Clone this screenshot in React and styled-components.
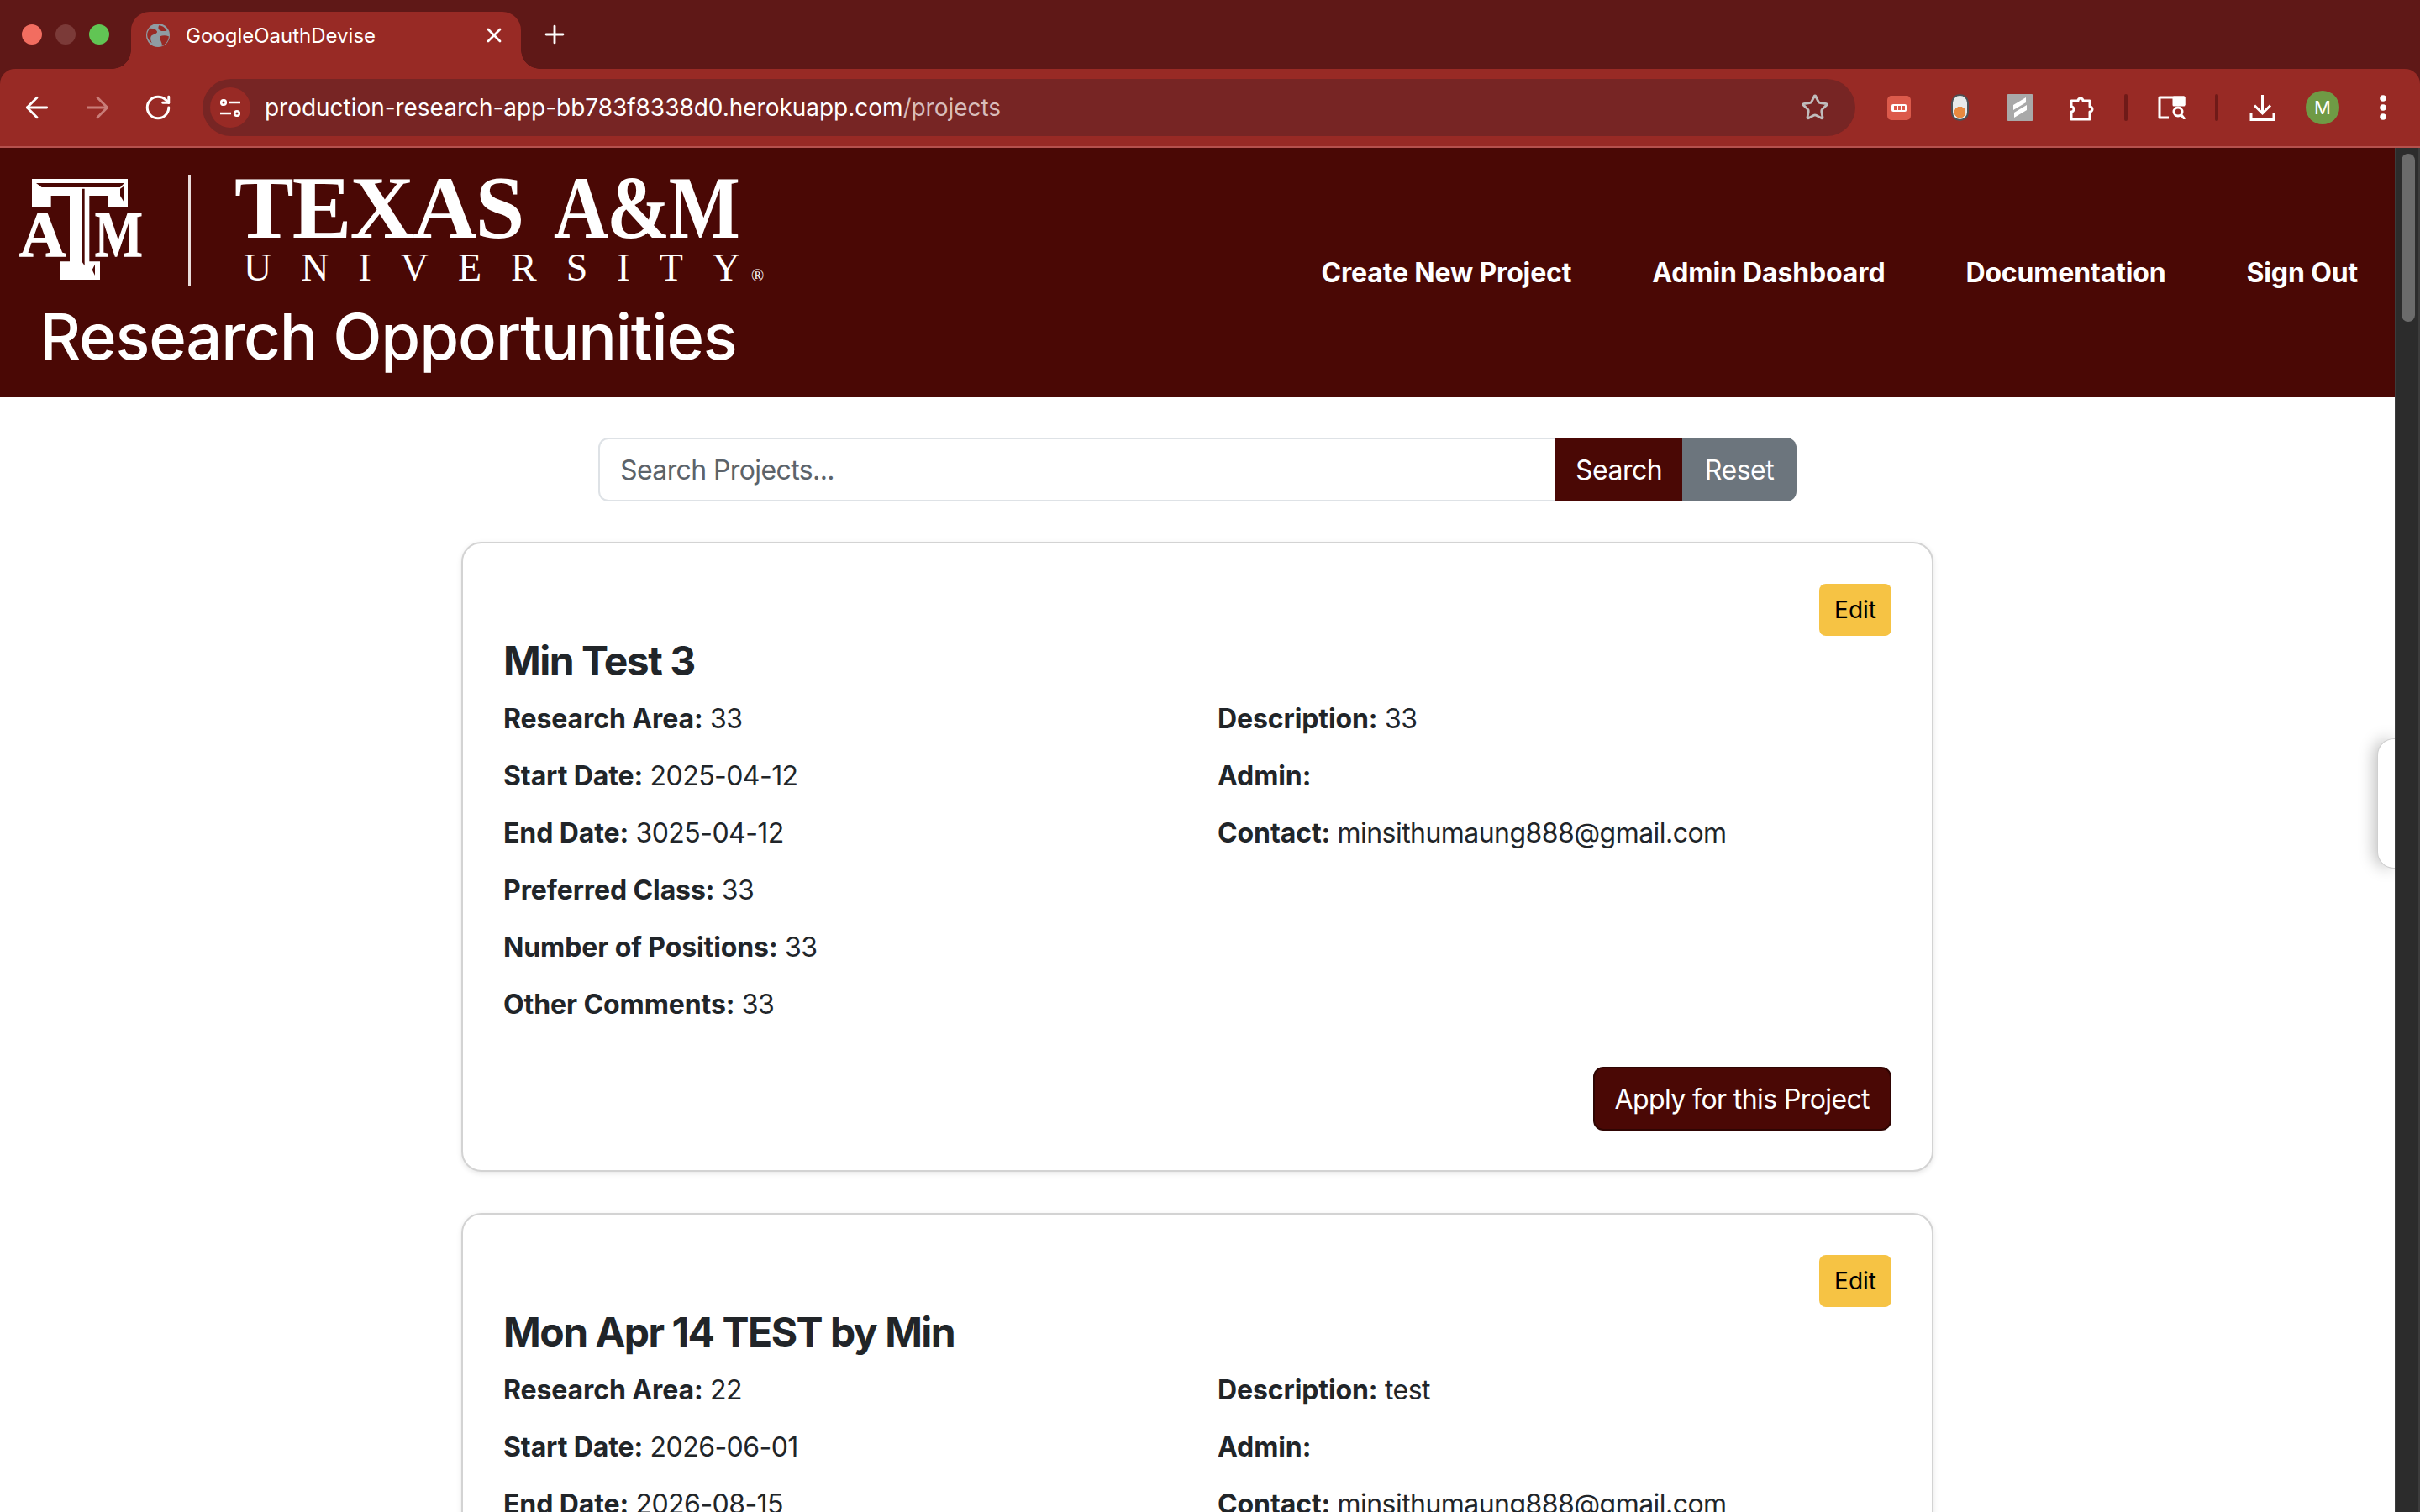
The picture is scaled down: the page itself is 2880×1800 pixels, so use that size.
import React from 'react'
import styled, { createGlobalStyle } from 'styled-components'
import { ArrowLeft, ArrowRight, RotateCw, Star, X, Plus } from 'lucide-react'

const GlobalStyle = createGlobalStyle`
  html, body {
    margin: 0;
    height: 100%;
    overflow: hidden;
    background: #fff;
  }
  * { box-sizing: border-box; }
  body {
    font-family: Inter, "Liberation Sans", sans-serif;
    color: #212529;
  }
`

const projects = [
  {
    title: 'Min Test 3',
    left: [
      ['Research Area:', '33'],
      ['Start Date:', '2025-04-12'],
      ['End Date:', '3025-04-12'],
      ['Preferred Class:', '33'],
      ['Number of Positions:', '33'],
      ['Other Comments:', '33'],
    ],
    right: [
      ['Description:', '33'],
      ['Admin:', ''],
      ['Contact:', 'minsithumaung888@gmail.com'],
    ],
  },
  {
    title: 'Mon Apr 14 TEST by Min',
    left: [
      ['Research Area:', '22'],
      ['Start Date:', '2026-06-01'],
      ['End Date:', '2026-08-15'],
      ['Preferred Class:', '22'],
      ['Number of Positions:', '22'],
      ['Other Comments:', '22'],
    ],
    right: [
      ['Description:', 'test'],
      ['Admin:', ''],
      ['Contact:', 'minsithumaung888@gmail.com'],
    ],
  },
]

const App = () => {
  return (
    <Screen>
      <GlobalStyle />
      <TabStrip>
        <Lights>
          <Light color="#f26d60" />
          <Light color="#7b3a38" />
          <Light color="#61c554" />
        </Lights>
        <Tab>
          <Globe viewBox="0 0 24 24">
            <circle cx="12" cy="12" r="12" fill="#8f9ca3" />
            <path d="M4 5c4 0 6 1 7 3s-3 3-5 4-2 5 0 8c-3-2-5-5-5-8s1-5 3-7zM14 13c3-1 6-1 9 0 0 4-3 8-7 10 1-3-3-7-2-10zM13 2c3 0 6 2 8 5-2 1-5 1-7 0s-2-3-1-5z" fill="#982a25" />
          </Globe>
          <TabTitle>GoogleOauthDevise</TabTitle>
          <CloseSlot><X size={28} color="#fff" strokeWidth={2.4} /></CloseSlot>
        </Tab>
        <NewTab>
          <Plus size={34} color="#fff" strokeWidth={2} />
        </NewTab>
      </TabStrip>

      <Toolbar>
        <NavIcons>
          <NavSlot><ArrowLeft size={40} color="#fff" strokeWidth={1.7} /></NavSlot>
          <NavSlot><ArrowRight size={40} color="#c97d78" strokeWidth={1.7} /></NavSlot>
          <NavSlot><RotateCw size={34} color="#fff" strokeWidth={2.1} /></NavSlot>
        </NavIcons>
        <Omnibox>
          <SiteInfo>
            <TuneIcon viewBox="0 0 24 21" fill="none" stroke="#fff" strokeWidth="2.6">
              <circle cx="4" cy="4" r="2.8" />
              <path d="M11 4h13M0 17h13" />
              <circle cx="20" cy="17" r="2.8" />
            </TuneIcon>
          </SiteInfo>
          <Url>
            production-research-app-bb783f8338d0.herokuapp.com<span>/projects</span>
          </Url>
          <Star size={34} color="#c0bcbc" strokeWidth={2} />
        </Omnibox>
        <Extensions>
          <ToolSlot $w={72}><ExtRed><span><i /><i /><i /></span></ExtRed></ToolSlot>
          <ToolSlot $w={72}><ExtPill /></ToolSlot>
          <ToolSlot $w={72}>
            <ExtGrey viewBox="0 0 32 32">
              <rect width="32" height="32" rx="2" fill="#a9a9a9" />
              <path d="M8 13 23 4v6L8 19zM9 22l15-9v6L9 28z" fill="#fff" />
            </ExtGrey>
          </ToolSlot>
          <ToolSlot $w={76}>
            <PuzzleIcon viewBox="0 0 30 31" fill="none" stroke="#fff" strokeWidth="3" strokeLinejoin="round">
              <path d="M2 7h8a3 3 0 0 1 6 0h8v7a3 3 0 0 1 0 6v9H2v-9a3 3 0 0 0 0-6z" />
            </PuzzleIcon>
          </ToolSlot>
          <ToolSlot $w={28}><Divider /></ToolSlot>
          <ToolSlot $w={80}>
            <ReaderIcon viewBox="0 0 33 28" fill="none" stroke="#fff" strokeWidth="3" strokeLinejoin="round">
              <path d="M13 26H2V2h29v9" />
              <path d="M19 2h12v9H19z" fill="#fff" />
              <circle cx="24" cy="19" r="5" />
              <path d="m28 23 4 5" />
            </ReaderIcon>
          </ToolSlot>
          <ToolSlot $w={28}><Divider /></ToolSlot>
          <ToolSlot $w={80}>
            <DownloadIcon viewBox="0 0 31 31" fill="none" stroke="#fff" strokeWidth="3">
              <path d="M15.5 0v21M6 12.5l9.5 9.5 9.5-9.5" />
              <path d="M2 21v8.5h27V21" />
            </DownloadIcon>
          </ToolSlot>
          <ToolSlot $w={64}><Avatar>M</Avatar></ToolSlot>
          <ToolSlot $w={80}>
            <DotsIcon viewBox="0 0 10 32" fill="#fff">
              <circle cx="5" cy="5" r="3.8" />
              <circle cx="5" cy="16" r="3.8" />
              <circle cx="5" cy="27" r="3.8" />
            </DotsIcon>
          </ToolSlot>
        </Extensions>
      </Toolbar>

      <Viewport>
        <Page>
          <Header>
            <Brand>
              <LogoRow>
                <LogoMark viewBox="0 0 438 360">
                  <path d="M45 0H387V100H318V60H250V295H288V360H145V295H180V60H113V100H45Z" fill="#fff" />
                  <path d="M60 15H375L360 30H80Z" fill="#4a0805" />
                  <path d="M223 35H233V310L223 295Z" fill="#4a0805" />
                  <path d="M360 35L375 25V85L360 60Z" fill="#4a0805" />
                  <path d="M260 325L270 305V345Z" fill="#4a0805" />
                  <text x="0" y="275" fontFamily="Liberation Serif" fontWeight="700" fontSize="232" textLength="165" lengthAdjust="spacingAndGlyphs" fill="#fff" stroke="#fff" strokeWidth="4">A</text>
                  <text x="270" y="275" fontFamily="Liberation Serif" fontWeight="700" fontSize="232" textLength="170" lengthAdjust="spacingAndGlyphs" fill="#fff" stroke="#fff" strokeWidth="4">M</text>
                </LogoMark>
                <LogoRule />
                <Wordmark>
                  <WordTop>TEXAS <Narrow>A&amp;M</Narrow></WordTop>
                  <WordBottom>UNIVERSITY<sup>®</sup></WordBottom>
                </Wordmark>
              </LogoRow>
              <PageTitle>Research Opportunities</PageTitle>
            </Brand>
            <MainNav>
              <NavLink>Create New Project</NavLink>
              <NavLink>Admin Dashboard</NavLink>
              <NavLink>Documentation</NavLink>
              <NavLink>Sign Out</NavLink>
            </MainNav>
          </Header>

          <SearchForm>
            <SearchInput placeholder="Search Projects..." />
            <SearchButton>Search</SearchButton>
            <ResetButton>Reset</ResetButton>
          </SearchForm>

          <CardList>
            {projects.map((project) => (
              <Card key={project.title}>
                <EditRow>
                  <EditButton>Edit</EditButton>
                </EditRow>
                <CardTitle>{project.title}</CardTitle>
                <Columns>
                  <div>
                    {project.left.map(([label, value]) => (
                      <Field key={label}><b>{label}</b> {value}</Field>
                    ))}
                  </div>
                  <div>
                    {project.right.map(([label, value]) => (
                      <Field key={label}><b>{label}</b> {value}</Field>
                    ))}
                  </div>
                </Columns>
                <ApplyRow>
                  <ApplyButton>Apply for this Project</ApplyButton>
                </ApplyRow>
              </Card>
            ))}
          </CardList>

          <SideHandle />
        </Page>
        <Scrollbar>
          <Thumb />
        </Scrollbar>
      </Viewport>
    </Screen>
  )
}

const Screen = styled.div`
  width: 2880px;
  height: 1800px;
  display: flex;
  flex-direction: column;
  overflow: hidden;
  background: #5f1817;
`

const TabStrip = styled.div`
  height: 82px;
  flex: none;
  background: #5f1817;
  display: flex;
  align-items: flex-end;
`

const Lights = styled.div`
  width: 156px;
  height: 82px;
  flex: none;
  padding-left: 26px;
  display: flex;
  align-items: center;
  gap: 16px;
`

const Light = styled.span`
  width: 24px;
  height: 24px;
  border-radius: 50%;
  background: ${(p) => p.color};
`

const Tab = styled.div`
  position: relative;
  width: 464px;
  height: 68px;
  flex: none;
  padding: 0 14px 12px 18px;
  background: #982a25;
  border-radius: 22px 22px 0 0;
  display: flex;
  align-items: center;

  &::before,
  &::after {
    content: '';
    position: absolute;
    bottom: 0;
    width: 22px;
    height: 22px;
  }

  &::before {
    left: -22px;
    background: radial-gradient(circle at 0 0, transparent 21.5px, #982a25 22px);
  }

  &::after {
    right: -22px;
    background: radial-gradient(circle at 100% 0, transparent 21.5px, #982a25 22px);
  }
`

const Globe = styled.svg`
  width: 28px;
  height: 28px;
  flex: none;
`

const TabTitle = styled.span`
  flex: 1;
  margin-left: 19px;
  color: #fff;
  font-size: 24px;
`

const CloseSlot = styled.div`
  width: 36px;
  display: flex;
  justify-content: center;
`

const NewTab = styled.div`
  margin-left: 23px;
  align-self: center;
  display: flex;
`

const Toolbar = styled.div`
  height: 94px;
  flex: none;
  background: #982a25;
  border-bottom: 2px solid #b5514d;
  border-radius: 18px 18px 0 0;
  display: flex;
  align-items: center;
`

const NavIcons = styled.div`
  width: 241px;
  flex: none;
  padding-left: 8px;
  display: flex;
  align-items: center;
`

const NavSlot = styled.div`
  width: 72px;
  display: flex;
  justify-content: center;
`

const Omnibox = styled.div`
  width: 1967px;
  height: 68px;
  flex: none;
  border-radius: 34px;
  background: #772524;
  display: flex;
  align-items: center;
  padding: 0 31px 0 9px;
`

const SiteInfo = styled.div`
  width: 48px;
  height: 48px;
  border-radius: 50%;
  background: #982a25;
  display: flex;
  align-items: center;
  justify-content: center;
  flex: none;
`

const TuneIcon = styled.svg`
  width: 24px;
  height: 21px;
`

const Url = styled.div`
  flex: 1;
  margin-left: 17px;
  color: #fff;
  font-size: 28px;
  letter-spacing: -0.03px;

  span {
    color: #d8bdbb;
  }
`

const Extensions = styled.div`
  flex: 1;
  display: flex;
  align-items: center;
  padding-left: 16px;
`

const ToolSlot = styled.div`
  width: ${(p) => p.$w}px;
  flex: none;
  display: flex;
  align-items: center;
  justify-content: center;
`

const ExtRed = styled.div`
  width: 28px;
  height: 29px;
  border-radius: 5px;
  background: #dc5a4b;
  display: flex;
  align-items: center;
  justify-content: center;

  span {
    width: 18px;
    height: 9px;
    border-radius: 2px;
    background: #fff;
    display: flex;
    align-items: center;
    justify-content: center;
    gap: 2px;
  }

  i {
    width: 3px;
    height: 5px;
    background: #dc5a4b;
  }
`

const ExtPill = styled.div`
  width: 21px;
  height: 32px;
  border-radius: 11px;
  border: 2px solid #4c5055;
  background: radial-gradient(circle at 50% 70%, #e8893f 6.5px, #e8eaea 7px);
`

const ExtGrey = styled.svg`
  width: 32px;
  height: 32px;
`

const PuzzleIcon = styled.svg`
  width: 30px;
  height: 31px;
`

const Divider = styled.div`
  width: 4px;
  height: 32px;
  border-radius: 2px;
  background: #6f1a18;
`

const ReaderIcon = styled.svg`
  width: 33px;
  height: 28px;
`

const DownloadIcon = styled.svg`
  width: 31px;
  height: 31px;
`

const DotsIcon = styled.svg`
  width: 10px;
  height: 32px;
`

const Avatar = styled.div`
  width: 40px;
  height: 40px;
  border-radius: 50%;
  background: #6f9a45;
  color: #fff;
  font-size: 22px;
  display: flex;
  align-items: center;
  justify-content: center;
`

const Viewport = styled.div`
  flex: 1;
  min-height: 0;
  display: flex;
  background: #fff;
`

const Page = styled.div`
  position: relative;
  flex: 1;
  min-width: 0;
  overflow: hidden;
`

const Header = styled.header`
  height: 297px;
  background: #4a0805;
  padding: 0 44px 0 23px;
  display: flex;
  justify-content: space-between;
`

const Brand = styled.div`
  display: flex;
  flex-direction: column;
`

const LogoRow = styled.div`
  height: 166px;
  padding-top: 32px;
  display: flex;
  align-items: flex-start;
`

const LogoMark = styled.svg`
  width: 146px;
  height: 120px;
  margin-top: 5px;
  flex: none;
`

const LogoRule = styled.div`
  width: 3px;
  height: 132px;
  margin-left: 55px;
  background: #e9dcdb;
`

const Wordmark = styled.div`
  margin-left: 52px;
  color: #fff;
  font-family: "Liberation Serif", serif;
`

const WordTop = styled.div`
  font-size: 106px;
  line-height: 84px;
  height: 84px;
  margin-top: -2px;
  letter-spacing: -2px;
  word-spacing: 12px;
  white-space: nowrap;
  font-weight: 700;
`

const Narrow = styled.span`
  display: inline-block;
  transform: scaleX(0.85);
  transform-origin: left center;
`

const WordBottom = styled.div`
  font-size: 46px;
  line-height: 44px;
  margin: 7px 0 0 11px;
  letter-spacing: 35px;
  white-space: nowrap;

  sup {
    font-size: 20px;
    letter-spacing: 0;
    margin-left: -22px;
    vertical-align: -1px;
  }
`

const PageTitle = styled.h1`
  margin: 10px 0 0 24px;
  font-size: 76px;
  line-height: 96px;
  font-weight: 500;
  letter-spacing: -1.2px;
  color: #fff;
  white-space: nowrap;
`

const MainNav = styled.nav`
  display: flex;
  align-items: center;
  gap: 96px;
`

const NavLink = styled.a`
  color: #fff;
  font-size: 32px;
  font-weight: 700;
  letter-spacing: -0.15px;
  white-space: nowrap;
`

const SearchForm = styled.form`
  width: 1426px;
  height: 76px;
  margin: 48px auto 0;
  display: flex;
`

const SearchInput = styled.input`
  flex: 1;
  min-width: 0;
  padding: 0 24px;
  border: 2px solid #dee2e6;
  border-right: 0;
  border-radius: 12px 0 0 12px;
  font: 400 32px Inter, sans-serif;
  letter-spacing: -0.6px;
  color: #212529;
  background: #fff;

  &::placeholder {
    color: #5c636a;
    opacity: 1;
  }
`

const SearchButton = styled.div`
  width: 151px;
  background: #4a0805;
  color: #fff;
  font-size: 32px;
  letter-spacing: -0.5px;
  display: flex;
  align-items: center;
  justify-content: center;
`

const ResetButton = styled(SearchButton)`
  width: 136px;
  background: #6c757d;
  border-radius: 0 12px 12px 0;
`

const CardList = styled.div`
  width: 1752px;
  margin: 48px auto 0;
  display: flex;
  flex-direction: column;
  gap: 49px;
`

const Card = styled.section`
  height: 750px;
  flex: none;
  padding: 48px 48px 47px;
  background: #fff;
  border: 2px solid #d3d3d3;
  border-radius: 24px;
  box-shadow: 0 2px 6px rgba(0, 0, 0, 0.1);
  display: flex;
  flex-direction: column;
`

const EditRow = styled.div`
  display: flex;
  justify-content: flex-end;
`

const EditButton = styled.div`
  height: 62px;
  padding: 0 18px;
  border-radius: 8px;
  background: #f6c344;
  color: #000;
  font-size: 28px;
  display: flex;
  align-items: center;
`

const CardTitle = styled.h3`
  margin: 1px 0 16px;
  font-size: 48px;
  line-height: 58px;
  font-weight: 700;
  letter-spacing: -1.5px;
  color: #212529;
`

const Columns = styled.div`
  display: grid;
  grid-template-columns: 1fr 1fr;
  column-gap: 48px;
`

const Field = styled.p`
  margin: 0 0 20px;
  font-size: 32px;
  line-height: 48px;
  letter-spacing: -0.55px;
  color: #212529;

  b {
    font-weight: 700;
    letter-spacing: -0.1px;
  }
`

const ApplyRow = styled.div`
  margin-top: auto;
  display: flex;
  justify-content: flex-end;
`

const ApplyButton = styled.div`
  height: 76px;
  padding: 0 24px;
  border-radius: 12px;
  background: #4a0805;
  border: 2px solid #2f0503;
  color: #fff;
  font-size: 32px;
  letter-spacing: -0.6px;
  display: flex;
  align-items: center;
`

const SideHandle = styled.div`
  position: absolute;
  right: 0;
  top: 703px;
  width: 21px;
  height: 155px;
  background: #fff;
  border: 1px solid #cfcfcf;
  border-right: 0;
  border-radius: 20px 0 0 20px;
  box-shadow: -4px 0 18px rgba(0, 0, 0, 0.25);
`

const Scrollbar = styled.div`
  width: 30px;
  flex: none;
  background: #2c2c2c;
  border-left: 2px solid #3c3c3c;
  border-right: 2px solid #3c3c3c;
  padding: 7px 4px 0 6px;
`

const Thumb = styled.div`
  height: 200px;
  border-radius: 8px;
  background: #6b6b6b;
`

export default App
